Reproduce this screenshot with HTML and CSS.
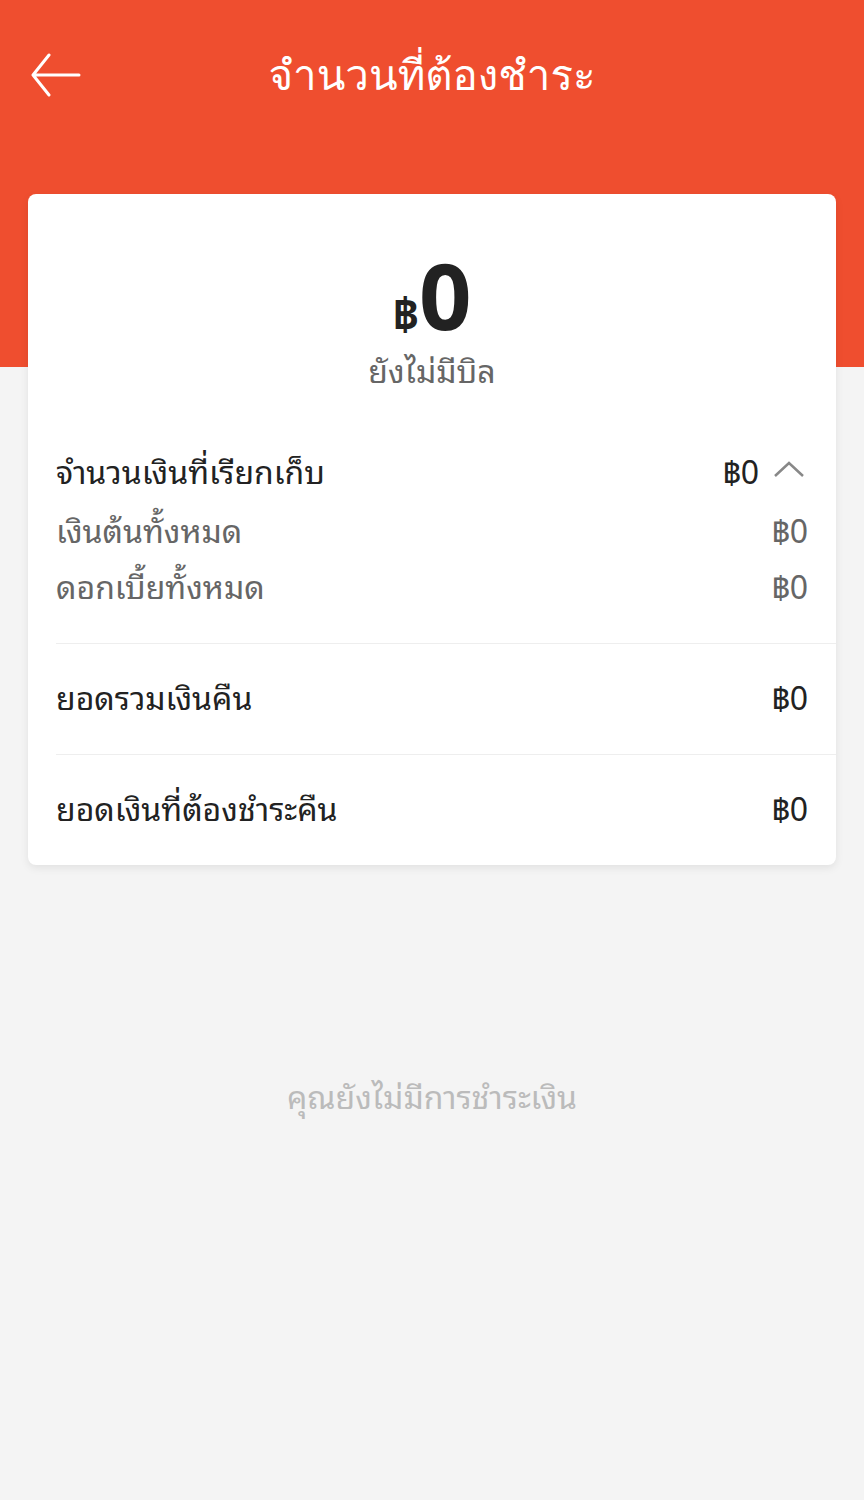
FILE: index.html
```html
<!DOCTYPE html>
<html lang="th">
<head>
    <meta charset="UTF-8">
    <meta name="viewport" content="width=device-width, initial-scale=1.0">
    <title>จำนวนที่ต้องชำระ</title>
    <link rel="stylesheet" href="styles.css">
</head>
<body>

    <div class="top-bar">
        <div class="header">
            <span class="back-btn">
                <svg width="50" height="44" viewBox="0 0 50 44">
                    <path d="M48 22H3M18 2L2 22l16 20" fill="none" stroke="#fff" stroke-width="3" stroke-linecap="round" stroke-linejoin="round"/>
                </svg>
            </span>
            <h1 class="title">จำนวนที่ต้องชำระ</h1>
        </div>
    </div>

    <div class="card">
        <div class="amount-box">
            <div class="amount"><span class="currency">฿</span>0</div>
            <div class="amount-note">ยังไม่มีบิล</div>
        </div>

        <div class="group">
            <div class="row main">
                <span>จำนวนเงินที่เรียกเก็บ</span>
                <span class="value">฿0
                    <svg class="chevron" width="32" height="20" viewBox="0 0 32 20">
                        <path d="M2 17L16 4l14 13" fill="none" stroke="#888" stroke-width="2.5"/>
                    </svg>
                </span>
            </div>
            <div class="row sub">
                <span>เงินต้นทั้งหมด</span>
                <span>฿0</span>
            </div>
            <div class="row sub">
                <span>ดอกเบี้ยทั้งหมด</span>
                <span>฿0</span>
            </div>
        </div>

        <div class="line-item">
            <span>ยอดรวมเงินคืน</span>
            <span>฿0</span>
        </div>
        <div class="line-item">
            <span>ยอดเงินที่ต้องชำระคืน</span>
            <span>฿0</span>
        </div>
    </div>

    <div class="empty">คุณยังไม่มีการชำระเงิน</div>

</body>
</html>
```

FILE: styles.css
```css
body {
    margin: 0;
    font-family: "Noto Sans", "Noto Sans Thai Looped", "Noto Sans Thai", "Liberation Sans", sans-serif;
    background-color: #f4f4f4;
    color: #222;
}
.top-bar {
    background-color: #ef4e2f;
    height: 367px;
}
.header {
    height: 150px;
    display: flex;
    align-items: center;
    justify-content: center;
    position: relative;
}
.back-btn {
    position: absolute;
    left: 31px;
    top: 53px;
}
.title {
    margin: 0;
    color: #fff;
    font-family: "Loma", "Garuda", "Noto Sans Thai Looped", "Noto Sans", sans-serif;
    font-size: 42px;
    font-weight: normal;
}
.card {
    background-color: #fff;
    margin: -173px 28px 0;
    border-radius: 8px;
    box-shadow: 0 3px 8px rgba(0, 0, 0, 0.08);
    padding-left: 28px;
}
.amount-box {
    text-align: center;
    padding: 53px 28px 0 0;
}
.amount {
    font-size: 92px;
    font-weight: bold;
    line-height: 96px;
    color: #222;
}
.currency {
    font-size: 46px;
}
.amount-note {
    margin-top: -17px;
    font-size: 32px;
    color: #666;
    line-height: 56px;
}
.group {
    padding: 40px 0 32px;
    border-bottom: 1px solid #eee;
}
.row {
    display: flex;
    justify-content: space-between;
    align-items: center;
    padding-right: 28px;
    font-size: 32px;
}
.row.main {
    height: 60px;
}
.row.sub {
    height: 54px;
    color: #666;
}
.row.sub:nth-child(2) {
    height: 58px;
}
.value {
    display: flex;
    align-items: center;
    gap: 14px;
}
.chevron {
    margin-right: 3px;
}
.line-item {
    display: flex;
    justify-content: space-between;
    align-items: center;
    box-sizing: border-box;
    height: 111px;
    padding: 0 28px 8px 0;
    font-size: 32px;
    border-bottom: 1px solid #eee;
}
.line-item:last-child {
    border-bottom: none;
    height: 110px;
}
.empty {
    text-align: center;
    margin-top: 204px;
    font-size: 32px;
    color: #bbb;
}
```
